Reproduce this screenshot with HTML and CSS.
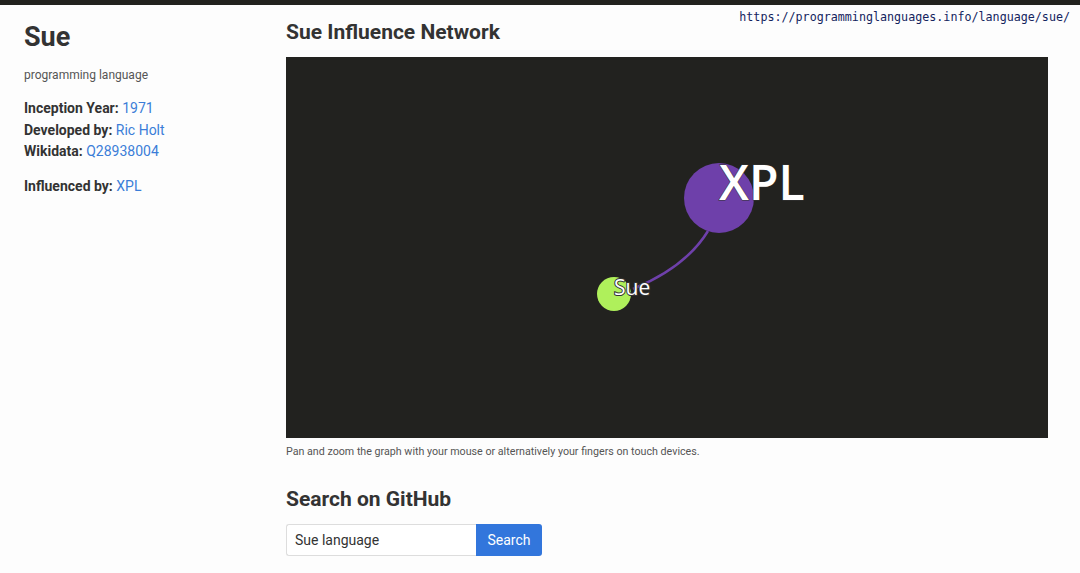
FILE: index.html
```html
<!DOCTYPE html>
<html>
<head>
<meta charset="utf-8">
<link rel="stylesheet" href="styles.css">
</head>
<body>
<div class="topbar"></div>
<div class="url">https://programminglanguages.info/language/sue/</div>
<div class="page">
  <aside class="side">
    <h1 class="title">Sue</h1>
    <p class="kind">programming language</p>
    <div class="facts">
      <div><b>Inception Year:</b> <a href="#">1971</a></div>
      <div><b>Developed by:</b> <a href="#">Ric Holt</a></div>
      <div><b>Wikidata:</b> <a href="#">Q28938004</a></div>
    </div>
    <div class="facts infl">
      <div><b>Influenced by:</b> <a href="#">XPL</a></div>
    </div>
  </aside>
  <main class="main">
    <h2 class="h2">Sue Influence Network</h2>
    <div class="graph">
      <svg width="762" height="381" viewBox="0 0 762 381">
        <path d="M347 232 Q 400 210 422 174" stroke="#6e40aa" stroke-width="2.5" fill="none"/>
        <circle cx="433" cy="141" r="35" fill="#6e40aa"/>
        <circle cx="328" cy="237" r="17" fill="#aff05b"/>
        <text x="433" y="143" class="lbl-big">XPL</text>
        <text x="328" y="238" class="lbl-small">Sue</text>
      </svg>
    </div>
    <p class="caption">Pan and zoom the graph with your mouse or alternatively your fingers on touch devices.</p>
    <h2 class="h2 gh">Search on GitHub</h2>
    <form class="search">
      <input class="input" type="text" value="Sue language">
      <button class="btn" type="button">Search</button>
    </form>
  </main>
</div>
</body>
</html>
```
FILE: styles.css
```css
html, body {
  margin: 0;
  padding: 0;
  background: #fdfdfd;
  font-family: Roboto, "Liberation Sans", sans-serif;
  color: #333;
}
.topbar {
  height: 5px;
  background: #22221e;
}
.url {
  position: absolute;
  top: 10px;
  right: 10px;
  font-family: "DejaVu Sans Mono", monospace;
  font-size: 11.7px;
  color: #14245e;
}
.page {
  display: grid;
  grid-template-columns: 238px 762px;
  column-gap: 24px;
  padding: 0 24px;
}
.title {
  margin: 13px 0 0;
  font-size: 27px;
  font-weight: 700;
  line-height: 38px;
  color: #333;
}
.kind {
  margin: 11px 0 0;
  font-size: 12px;
  color: #555;
  line-height: 16px;
}
.facts {
  margin-top: 15px;
  font-size: 14px;
  line-height: 21.5px;
}
.facts b {
  font-weight: 700;
  color: #333;
}
.facts a {
  color: #3b7dd8;
  text-decoration: none;
}
.infl {
  margin-top: 13px;
}
.h2 {
  margin: 13px 0 0;
  font-size: 21px;
  font-weight: 700;
  line-height: 28px;
  color: #333;
}
.graph {
  margin-top: 11px;
  width: 762px;
  height: 381px;
  background: #22221f;
}
.graph svg {
  display: block;
}
.lbl-big {
  font-family: "Open Sans", "DejaVu Sans", sans-serif;
  font-size: 48px;
  font-weight: 600;
  fill: #fff;
  stroke: #333;
  stroke-width: 1px;
  paint-order: stroke;
}
.lbl-small {
  font-family: "Open Sans", "DejaVu Sans", sans-serif;
  font-size: 21px;
  fill: #fff;
  stroke: #333;
  stroke-width: 2px;
  paint-order: stroke;
}
.caption {
  margin: 7px 0 0;
  font-size: 10.7px;
  color: #555;
  line-height: 14px;
}
.gh {
  margin-top: 26px;
}
.search {
  display: flex;
  margin-top: 11px;
}
.input {
  box-sizing: border-box;
  width: 190px;
  height: 32px;
  border: 1px solid #ddd;
  border-right: none;
  border-radius: 3px 0 0 3px;
  padding: 0 8px;
  font-family: Roboto, "Liberation Sans", sans-serif;
  font-size: 14px;
  color: #333;
  background: #fff;
}
.btn {
  height: 32px;
  width: 66px;
  border: none;
  border-radius: 0 3px 3px 0;
  background: #3276dc;
  color: #fff;
  font-family: Roboto, "Liberation Sans", sans-serif;
  font-size: 14px;
}
```
